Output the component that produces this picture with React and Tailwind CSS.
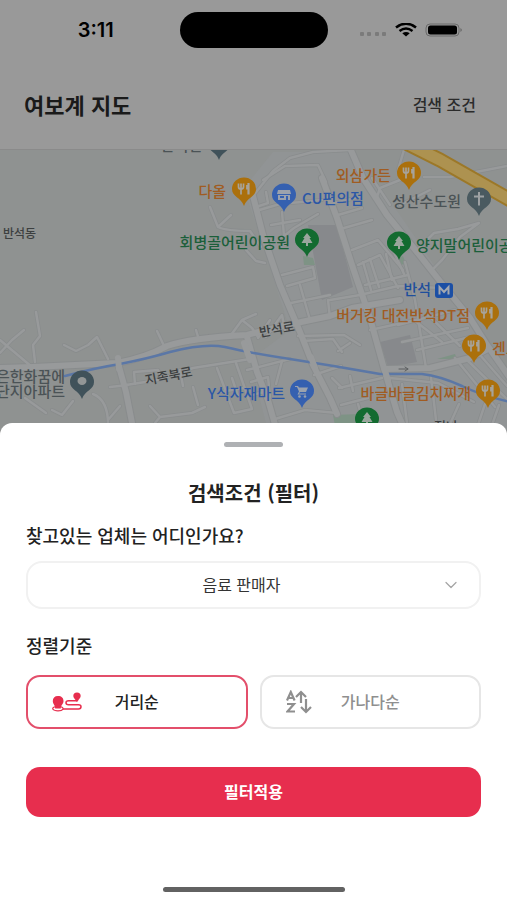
import { useState } from 'react'
import { ChevronDown } from 'lucide-react'
import clsx from 'clsx'

const PIN_COLORS = {
  food: '#ab700c',
  shop: '#3560b0',
  cart: '#3560b0',
  tree: '#136b30',
  church: '#4a5a60',
  place: '#40525a',
}

const PINS = [
  { kind: 'place', x: 219, y: 143 },
  { kind: 'food', x: 244, y: 189 },
  { kind: 'shop', x: 284, y: 195 },
  { kind: 'food', x: 409, y: 173 },
  { kind: 'church', x: 479, y: 199 },
  { kind: 'tree', x: 307, y: 240 },
  { kind: 'tree', x: 399, y: 243 },
  { kind: 'food', x: 487, y: 313 },
  { kind: 'food', x: 474, y: 346 },
  { kind: 'food', x: 488, y: 391 },
  { kind: 'cart', x: 302, y: 391 },
  { kind: 'tree', x: 367, y: 419 },
  { kind: 'place', x: 82, y: 382 },
]

const LABELS = [
  { text: '반석천', x: 202, y: 151, anchor: 'end', color: '#4b5356' },
  { text: '다올', x: 226, y: 197, anchor: 'end', color: '#a05c22' },
  { text: '외삼가든', x: 391, y: 181, anchor: 'end', color: '#a05c22' },
  { text: 'CU편의점', x: 302, y: 204, anchor: 'start', color: '#2b57a6' },
  { text: '성산수도원', x: 461, y: 207, anchor: 'end', color: '#4b5356' },
  { text: '회병골어린이공원', x: 290, y: 248, anchor: 'end', color: '#1b5f3a' },
  { text: '양지말어린이공원', x: 416, y: 251, anchor: 'start', color: '#1b5f3a' },
  { text: '반석', x: 431, y: 295, anchor: 'end', color: '#1f4f9c' },
  { text: '버거킹 대전반석DT점', x: 470, y: 321, anchor: 'end', color: '#a05c22' },
  { text: '겐로쿠우동', x: 492, y: 354, anchor: 'start', color: '#a05c22' },
  { text: '바글바글김치찌개', x: 471, y: 399, anchor: 'end', color: '#a05c22' },
  { text: 'Y식자재마트', x: 285, y: 399, anchor: 'end', color: '#2b57a6' },
  { text: '은한화꿈에', x: 65, y: 382, anchor: 'end', color: '#4b5356' },
  { text: '단지아파트', x: 65, y: 397, anchor: 'end', color: '#4b5356' },
]

const MAIN_ROADS = [
  'M350 148 L363 178 L387 215 L417 252 L443 285 L470 318 L487 345 L510 378',
  'M322 178 L337 218 L353 268 L370 318 L383 365 L397 412 L404 428',
  'M253 196 L263 235 L280 285 L300 332 L313 365 L330 398 L337 414',
  'M0 368 L33 367 L117 363 Q145 358 167 346 Q190 338 247 335 Q280 326 330 316 L352 308 L400 300',
  'M118 363 L126 392 L133 428',
  'M247 337 L257 372 L268 400 L276 428',
  'M386 369 L430 368 L470 358 L486 350',
]

const SIDE_ROADS = [
  'M253 196 L273 171 L290 158 L313 152 L350 150',
  'M126 385 L158 380 L193 368 L250 359',
  'M256 211 L280 204 L322 200',
  'M263 180 L285 166 L318 165 L326 182',
  'M334 203 L360 197 M338 215 L362 208 M344 228 L372 220 M372 178 L390 205',
  'M210 207 L218 227 L231 215 M218 227 Q226 231 250 231 L261 247 M246 250 L256 261 L265 263',
  'M256 207 L268 203 L266 192 M282 212 L284 236 L294 228 L318 214 M271 225 L300 220',
  'M352 250 L378 240 L403 270 M358 265 L380 255 L398 288 M365 285 L408 275',
  'M363 262 L371 290 M370 259 L379 287 M386 254 L392 280',
  'M282 275 L313 267 L315 278 L287 286 M291 303 L330 295 M300 285 L310 320',
  'M328 300 L330 318 M330 300 L360 295 L398 286 L442 288',
  'M405 262 L415 300 L426 368 M393 250 L404 274',
  'M398 325 L455 310 M402 342 L468 328 M370 330 L416 320',
  'M417 350 L470 337 M414 320 L442 342 M428 315 L460 346',
  'M400 180 L380 188 L376 200 M400 205 L430 190 M418 249 L434 233 L458 229 L479 223 L460 237 L442 260 L434 268 M404 150 L398 170',
  'M424 177 L450 177 L507 166',
  'M36 312 L40 336 L33 345 L35 362 M0 353 L12 340 L24 330 M0 340 L32 367',
  'M64 345 L76 351 L88 345 L97 337 L108 359 M157 331 L165 348 M196 330 L199 340',
  'M231 335 L242 320 L252 328 L258 337 M242 320 L256 314',
  'M266 337 L282 315 L285 330 M270 320 L258 338',
  'M108 424 Q108 400 93 394 M108 420 L120 406 M52 410 L62 415 L73 401 M25 398 L46 413',
  'M150 406 L160 417 L192 413 L205 407 M160 417 L155 423 M193 387 L198 405',
  'M135 384 L134 372 L158 370 L162 377 M110 387 L128 385 M180 370 L183 386',
  'M217 368 L234 413 L252 409 L236 363 M220 392 L244 388 M232 378 L238 396',
  'M247 370 L290 359 M251 382 L268 377 L270 397 M252 395 L264 392',
  'M298 336 L344 335 L360 345 M338 351 L350 343 M303 341 L333 339 L342 352',
  'M282 361 L276 384 M314 375 L341 366 M332 378 L342 388 M350 376 L353 391',
  'M339 388 L382 378 M337 413 L305 410 L275 419 M341 405 L368 398 M358 404 L363 421',
  'M390 378 L438 383 L474 402 M402 384 L407 423 M431 377 L436 420',
  'M467 360 L507 399 M480 355 L507 386 M455 358 L495 407 M478 425 L485 404 M492 425 L499 405 M450 424 L459 404',
]

/** Glyph inside a pin, drawn around the centre of its round head. */
function PinGlyph({ kind }) {
  if (kind === 'food') {
    return (
      <g stroke="#a7a39a" fill="none">
        <path d="M-5.500 -5.500 V-2 Q-5.500 0 -3 0 Q-0.500 0 -0.500 -2 V-5.500 M-3 -5.500 V5.500" strokeWidth="1.700" />
        <path d="M4.500 -6 V5.500 M3.200 -4 V0.500" strokeWidth="2.200" />
      </g>
    )
  }
  if (kind === 'shop') {
    return (
      <g fill="#9ba2ad">
        <path d="M-6 -5 H6 L7 -1 H-7 Z" />
        <path d="M-6 0 H6 V5 H-6 Z M-4 1 V3 H0 V1 Z M2 1 V5 H4 V1 Z" fillRule="evenodd" />
      </g>
    )
  }
  if (kind === 'cart') {
    return (
      <g fill="#9ba2ad">
        <path d="M-7 -5 H-4 L-3 -3.500 H6 L4 1 H-2 L-3 2.500 H4 V3.500 H-4.500 L-3 0.500 L-5 -4 H-7 Z" />
        <circle cx="-2.500" cy="5.500" r="1.300" />
        <circle cx="3" cy="5.500" r="1.300" />
      </g>
    )
  }
  if (kind === 'tree') {
    return <path d="M0 -7 L4 -2 H2.500 L5.500 3 H1 V6 H-1 V3 H-5.500 L-2.500 -2 H-4 Z" fill="#9aa69d" />
  }
  if (kind === 'church') {
    return <path d="M-1 -7 H1 V-3.500 H5 V-1.500 H1 V6.500 H-1 V-1.500 H-5 V-3.500 H-1 Z" fill="#9da1a3" />
  }
  return <ellipse cx="0" cy="-1" rx="4.500" ry="4" fill="#929696" />
}

function MapView() {
  return (
    <svg
      viewBox="0 150 507 281"
      preserveAspectRatio="xMidYMid slice"
      className="block h-[281px] w-full bg-[#8f9291]"
      role="img"
      aria-label="지도"
    >
      <path d="M244 188 L273 152 H350 L400 215 L470 318 L510 380 V431 H268 L250 360 L290 330 Z" fill="#919495" />
      <path d="M308 225 H337 L353 287 L322 300 Z M380 342 L410 335 L417 362 L388 367 Z" fill="#87898c" />
      <path d="M303 256 L313 258 L315 265 L304 265 Z M395 259 L403 256 L406 264 L396 265 Z M437 359 L455 354 L457 359 Z M333 415 L360 414 L380 431 H336 Z" fill="#7e9385" />

      <g fill="none" strokeLinejoin="round" strokeLinecap="round">
        {SIDE_ROADS.map((d) => (
          <path key={d} d={d} stroke="#898c8d" strokeWidth="4" />
        ))}
        {MAIN_ROADS.map((d) => (
          <path key={d} d={d} stroke="#898c8d" strokeWidth="8" />
        ))}
        {SIDE_ROADS.map((d) => (
          <path key={d} d={d} stroke="#989a9b" strokeWidth="2.500" />
        ))}
        {MAIN_ROADS.map((d) => (
          <path key={d} d={d} stroke="#989a9b" strokeWidth="6" />
        ))}
        <path
          d="M65 376 Q95 368 120 364 Q150 358 170 352 Q205 343 225 347 Q250 353 290 359 Q335 366 380 374 H422 Q440 376 462 386 Q480 395 510 402"
          stroke="#5b77a6"
          strokeWidth="2.500"
        />
        <path d="M118 358 L119 369 M244 343 L250 360 M311 357 L315 368 M384 368 L388 380" stroke="#989a9b" strokeWidth="6" />
        <path d="M400 140 L440 160 Q470 177 512 201" stroke="#9c7828" strokeWidth="15" />
        <path d="M400 140 L440 160 Q470 177 512 201" stroke="#ad9250" strokeWidth="11" />
        <path d="M399 369 H408 M405 367 L408 369 L405 371" stroke="#5c5f60" />
      </g>

      <g className="font-medium" fill="#3c3f40">
        <text x="3" y="238" fontSize="12">반석동</text>
        <text x="260" y="337" fontSize="13" transform="rotate(-10 260 337)">반석로</text>
        <text x="146" y="385" fontSize="13" transform="rotate(-11 146 385)">지족북로</text>
        <text x="434" y="431" fontSize="13">정나</text>
      </g>

      <g className="font-medium" fontSize="15">
        {LABELS.map((label) => (
          <text key={label.text} x={label.x} y={label.y} textAnchor={label.anchor} fill={label.color}>
            {label.text}
          </text>
        ))}
      </g>

      <rect x="435" y="283" width="18" height="15" rx="3" fill="#1b4fa5" />
      <path d="M439.500 294.500 V287 L444 292 L448.500 287 V294.500" fill="none" stroke="#a3a8b0" strokeWidth="2" />

      {PINS.map((pin) => (
        <g key={`${pin.x}-${pin.y}`} transform={`translate(${pin.x} ${pin.y})`}>
          <path
            d="M0 17 C-3 8 -12 8 -12 0 A12 11.500 0 1 1 12 0 C12 8 3 8 0 17 Z"
            fill={PIN_COLORS[pin.kind]}
          />
          <PinGlyph kind={pin.kind} />
        </g>
      ))}
    </svg>
  )
}

function StatusBar() {
  return (
    <div className="grid h-[59px] grid-cols-[1fr_148px_1fr] items-center">
      <span className="pl-3 text-center font-['Inter',sans-serif] text-xl font-semibold text-black">3:11</span>
      <span className="h-9 rounded-full bg-black" />
      <div className="flex items-center justify-center gap-2 pr-3">
        <svg viewBox="0 0 27 14" className="h-3.5 w-[27px]" fill="#7b7b7b" aria-hidden="true">
          <rect x="0" y="9" width="4" height="4" rx="1" />
          <rect x="7" y="9" width="4" height="4" rx="1" />
          <rect x="15" y="9" width="4" height="4" rx="1" />
          <rect x="22" y="9" width="4" height="4" rx="1" />
        </svg>
        <svg viewBox="0 0 22 14" className="h-3.5 w-[22px]" fill="none" stroke="#000" aria-hidden="true">
          <path d="M1 4.500 Q11 -3 21 4.500" strokeWidth="2.600" />
          <path d="M4.500 8 Q11 3 17.500 8" strokeWidth="2.400" />
          <path d="M7.300 10.200 Q11 7.600 14.700 10.200 L11 13.500 Z" fill="#000" stroke="none" />
        </svg>
        <svg viewBox="0 0 38 14" className="h-3.5 w-[38px]" aria-hidden="true">
          <rect x="1" y="1" width="33" height="12" rx="4" fill="none" stroke="#6a6a6a" />
          <rect x="3" y="2.500" width="29" height="9" rx="2.500" fill="#000" />
          <path d="M35.500 5 Q38 7 35.500 9 Z" fill="#5f5f5f" />
        </svg>
      </div>
    </div>
  )
}

function RouteIcon() {
  return (
    <svg viewBox="0 0 30 20" className="h-5 w-[30px]" fill="none" stroke="currentColor" aria-hidden="true">
      <g fill="currentColor" stroke="none">
        <path d="M6 4 C9.500 4 11.500 6 11.500 9 C11.500 12 9 12.500 8.800 16.500 H3.200 C3 12.500 0.800 12 0.800 9 C0.800 6 2.500 4 6 4 Z" />
        <path d="M25 0.500 C27.500 0.500 28.700 2 28.700 4 C28.700 6.200 26.300 7 25.800 9.500 H24.200 C23.700 7 21.300 6.200 21.300 4 C21.300 2 22.500 0.500 25 0.500 Z" />
      </g>
      <path d="M3 14.800 C-1 16 0.500 18.800 6 18.800 C11.500 18.800 12.500 16 9 14.800" strokeWidth="1.200" />
      <path
        d="M25 8.800 H16.500 Q14 8.800 14 10.700 Q14 12.700 16.500 12.700 H26.500 Q29 12.700 29 14.800 Q29 17 26.500 17 H11"
        strokeWidth="1.500"
      />
    </svg>
  )
}

function SortAZIcon() {
  return (
    <svg
      viewBox="0 0 26 24"
      className="h-6 w-[26px]"
      fill="none"
      stroke="currentColor"
      strokeWidth="2.200"
      aria-hidden="true"
    >
      <path d="M1 10.500 L4.800 2 L8.600 10.500 M2.500 8 H7" />
      <path d="M1 14 H8 L1.500 21.500 H9" />
      <path d="M15 13 V2.500 M10 7 L15 2 L20 7" />
      <path d="M20 9 V21 M15 17 L20 22 L25 17" />
    </svg>
  )
}

const SORT_OPTIONS = [
  { value: 'distance', label: '거리순', Icon: RouteIcon },
  { value: 'name', label: '가나다순', Icon: SortAZIcon },
]

function FilterSheet() {
  const [category, setCategory] = useState('음료 판매자')
  const [sort, setSort] = useState('distance')

  return (
    <form
      className="relative -mt-2 flex flex-1 flex-col rounded-t-xl bg-white px-[26px] pt-[19px] pb-2"
      onSubmit={(e) => e.preventDefault()}
    >
      <span className="h-[5px] w-[59px] self-center rounded-full bg-[#afb1b4]" />
      <h2 className="mt-8 text-center text-xl leading-7 font-bold">검색조건 (필터)</h2>

      <label htmlFor="category" className="mt-4 text-lg leading-6 font-medium">
        찾고있는 업체는 어디인가요?
      </label>
      <div className="relative mt-3.5">
        <select
          id="category"
          value={category}
          onChange={(e) => setCategory(e.target.value)}
          className="h-12 w-full appearance-none rounded-2xl border-2 border-[#f1f1f1] bg-white pr-6 pb-0.5 text-center text-base text-[#333] [text-align-last:center]"
        >
          <option>음료 판매자</option>
          <option>식품 판매자</option>
        </select>
        <ChevronDown
          className="pointer-events-none absolute top-1/2 right-5 size-5 -translate-y-1/2 text-[#a5a5a5]"
          strokeWidth={1.5}
          aria-hidden="true"
        />
      </div>

      <fieldset className="mt-6">
        <legend className="text-lg leading-6 font-medium">정렬기준</legend>
        <div className="mt-[18px] grid grid-cols-2 gap-3">
          {SORT_OPTIONS.map(({ value, label, Icon }) => (
            <label
              key={value}
              className={clsx(
                'relative grid h-[54px] cursor-pointer grid-cols-[1fr_auto_1fr] items-center rounded-[14px] border-2 text-base font-medium',
                sort === value ? 'border-[#e34f6b]' : 'border-[#e6e6e6] text-[#8f8f8f]',
              )}
            >
              <input
                type="radio"
                name="sort"
                value={value}
                checked={sort === value}
                onChange={() => setSort(value)}
                className="sr-only"
              />
              <span className={clsx('pl-6', sort === value && 'text-[#e72e4e]')}>
                <Icon />
              </span>
              <span className="pb-0.5">{label}</span>
            </label>
          ))}
        </div>
      </fieldset>

      <button
        type="submit"
        className="mt-[38px] h-[50px] rounded-[14px] bg-[#e72e4e] pb-0.5 text-base font-bold text-white"
      >
        필터적용
      </button>

      <span className="mt-auto h-[5px] w-[182px] self-center rounded-full bg-[#626262]" />
    </form>
  )
}

export default function App() {
  return (
    <main
      lang="ko"
      className="flex min-h-screen flex-col bg-[#999] font-['Noto_Sans_CJK_KR',sans-serif] text-[#222]"
    >
      <StatusBar />
      <header className="flex h-[91px] items-center justify-between border-b border-[#8a8a8a] pr-[31px] pl-6">
        <h1 className="text-[22px] font-bold text-[#1a1a1a]">여보계 지도</h1>
        <button type="button" className="text-base font-medium text-[#2b2b2b]">
          검색 조건
        </button>
      </header>
      <MapView />
      <FilterSheet />
    </main>
  )
}
